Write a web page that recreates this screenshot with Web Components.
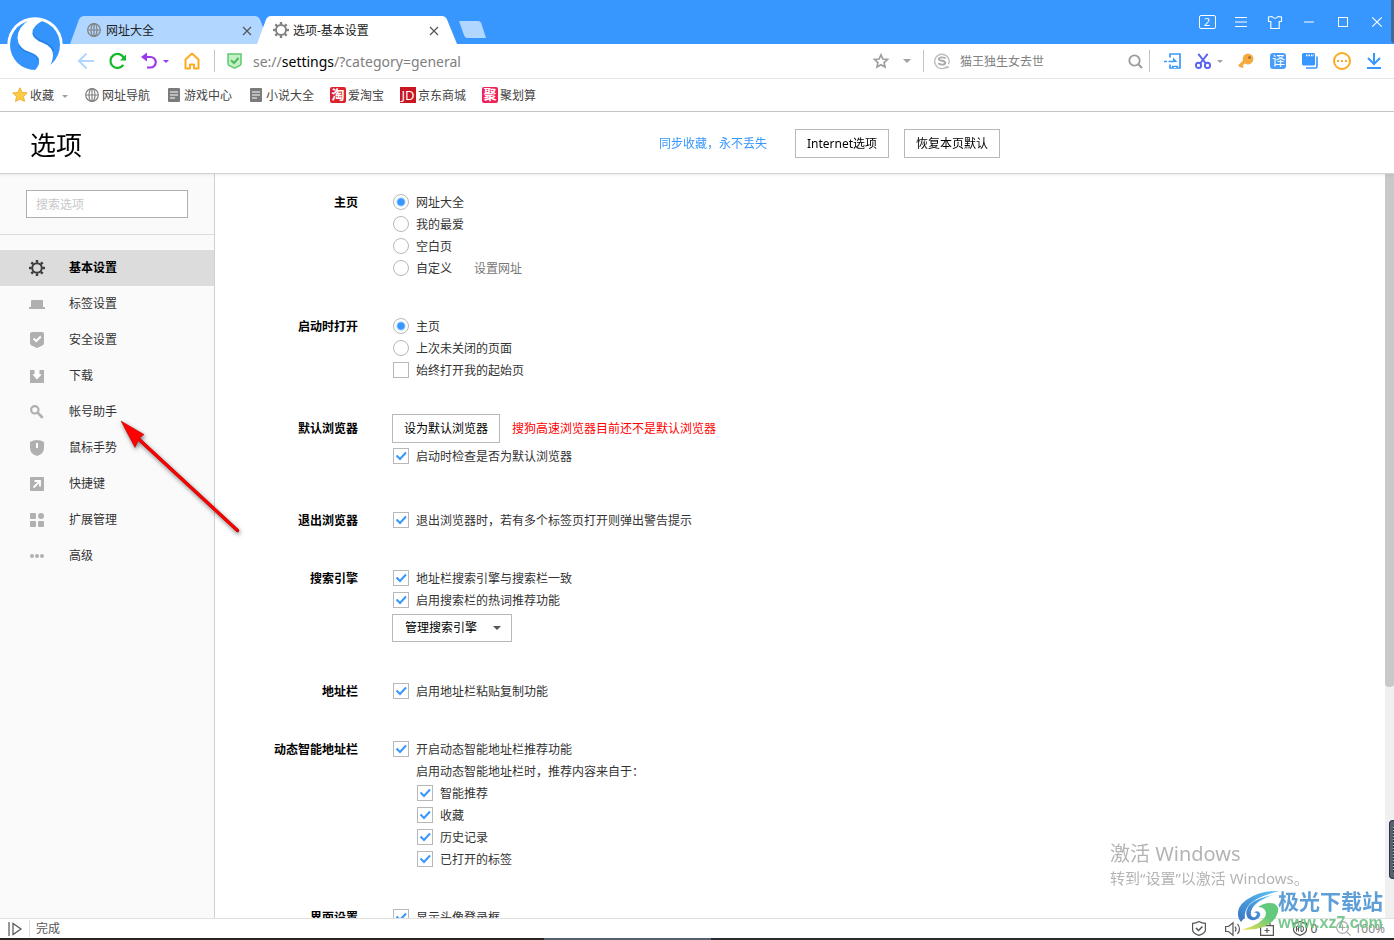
<!DOCTYPE html>
<html lang="zh-CN">
<head>
<meta charset="utf-8">
<title>选项-基本设置</title>
<style>
  html, body { margin: 0; height: 100%; }
  body {
    font: 12px/22px "Noto Sans", "Noto Sans CJK SC", sans-serif;
    color: #333;
    background: #fff;
    --blue: #3896ff;
    --line: #c8c8c8;
  }
</style>
</head>
<body>
<browser-window></browser-window>

<script>
const define = (tag, html, setup) => {
  const template = document.createElement('template');
  template.innerHTML = html;
  customElements.define(tag, class extends HTMLElement {
    constructor() {
      super();
      this.attachShadow({ mode: 'open' }).append(template.content.cloneNode(true));
    }
    connectedCallback() { if (setup) setup(this, this.shadowRoot); }
  });
};

/* name: [width, height, markup] */
const gear = (r, c, n) => {
  let s = `<circle cx="8" cy="8" r="${r}" fill="none" stroke="${c}" stroke-width="2"/>`;
  for (let i = 0; i < n; i++) s += `<path d="M8 0v2.6" stroke="${c}" stroke-width="2.4" transform="rotate(${i * 360 / n} 8 8)"/>`;
  return s;
};
const globe = '<g fill="none" stroke="#808080" stroke-width="1.2"><circle cx="7" cy="7" r="6.3"/><ellipse cx="7" cy="7" rx="3" ry="6.3"/><path d="M7 .7v12.6M.7 7h12.6"/></g>';
const doc = '<rect width="12" height="14" rx="1" fill="#7b7b7b"/><path d="M2 4h8M2 7h8M2 10h5" stroke="#fff" stroke-width="1.2"/>';
const ICONS = {
  globe: [14, 14, globe],
  doc: [12, 14, doc],
  gearTab: [16, 16, gear(5, '#828282', 8)],
  gear: [16, 16, gear(4.8, '#3c3c3c', 8)],
  close: [10, 10, '<path d="M1 1l8 8M9 1l-8 8" stroke="#555" stroke-width="1.2"/>'],
  newtab: [28, 17, '<path d="M1 0h19q2.500 0 3.300 2.300L28 17H9.500Q7 17 6.200 14.700Z" fill="#b1d6ff"/>'],
  tabs2: [17, 14, '<rect x=".5" y=".5" width="16" height="13" rx="1.500" fill="none" stroke="#fff"/>'],
  menu: [12, 10, '<path d="M0 .5h12M0 5h12M0 9.500h12" stroke="#fff"/>'],
  shirt: [14, 13, '<path d="M.5 1 4 .5Q7 4 10 .5l3.500.5v4.500h-2.300v7H2.800v-7H.5Z" fill="none" stroke="#fff" stroke-width="1.100"/>'],
  min: [10, 2, '<path d="M0 1h10" stroke="#fff"/>'],
  max: [10, 10, '<rect x=".5" y=".5" width="9" height="9" fill="none" stroke="#fff"/>'],
  winclose: [10, 10, '<path d="M.3.3l9.400 9.400M9.700.3.3 9.700" stroke="#fff" stroke-width="1.200"/>'],
  back: [16, 16, '<path d="M16 8H1M8.500.5 1 8l7.500 7.500" fill="none" stroke="#b1d6ff" stroke-width="2"/>'],
  reload: [18, 16, '<path d="M14.300 11.800A7 7 0 1 1 14.800 5" fill="none" stroke="#12b92a" stroke-width="2.200"/><path d="M17 1.500v6h-6Z" fill="#12b92a"/>'],
  undo: [16, 16, '<path d="M3 4h6.500a5.200 5.200 0 0 1 0 10.500H6" fill="none" stroke="#9a38f0" stroke-width="2.200"/><path d="M0 4 6-.5v9Z" fill="#9a38f0"/>'],
  caretPurple: [6, 3, '<path d="M0 0h6L3 3Z" fill="#9a38f0"/>'],
  caret: [8, 4, '<path d="M0 0h8L4 4Z" fill="#a0a0a0"/>'],
  caretSmall: [6, 3, '<path d="M0 0h6L3 3Z" fill="#a0a0a0"/>'],
  home: [16, 18, '<path d="M1.500 16.500v-9L8 1.500l6.500 6v9H10v-4H6v4Z" fill="none" stroke="#ffab1f" stroke-width="2" stroke-linejoin="round"/>'],
  shield: [15, 16, '<path d="M1 1h13v9.500q0 1.500-1.500 2.200L7.500 15.200 2.500 12.700Q1 12 1 10.500Z" fill="#c5f0c6" stroke="#62c970" stroke-width="1.500"/><path d="M4 7.200 7 10l4.500-5" fill="none" stroke="#4dbb5e" stroke-width="2"/>'],
  star: [16, 16, '<path d="M8 1.800 9.900 6l4.600.5-3.400 3.100.9 4.500L8 11.800l-4 2.300.9-4.500L1.500 6.500 6.100 6Z" fill="none" stroke="#9e9e9e" stroke-width="1.700"/>'],
  favStar: [16, 16, '<path d="M8 .8 10.200 5.400l5.100.6-3.800 3.500 1 5L8 12l-4.500 2.500 1-5L.7 6l5.100-.6Z" fill="#fccb45" stroke="#eeb23a"/>'],
  sogou: [16, 16, '<path d="M13.200 13.300a7.200 7.200 0 1 1 1.300-2M12 15.200l3-1.500" fill="none" stroke="#bdbdbd" stroke-width="1.300"/><path d="M11.500 5.500Q11 4.400 8 4.400T4.800 6.200Q5 7.500 8 7.800t3.300 2Q11 11.600 8 11.600T4.300 10.300" fill="none" stroke="#aaa" stroke-width="1.900"/>'],
  search: [15, 15, '<circle cx="6.500" cy="6.500" r="5.200" fill="none" stroke="#9b9b9b" stroke-width="1.800"/><path d="M10.500 10.500l3.500 3.500" stroke="#9b9b9b" stroke-width="2"/>'],
  send: [17, 16, '<path d="M6 4.500V1h10v14H6v-3.500" fill="none" stroke="#3d98fb" stroke-width="1.700"/><path d="M9 4.500 13.500 9H9Z" fill="#3d98fb"/><path d="M0 8.500h3m1.500 0H10" stroke="#3d98fb" stroke-width="1.700"/><path d="M8 13.500h6" stroke="#3d98fb" stroke-width="1.500"/><path d="M10 14.500h2" stroke="#fff"/>'],
  cut: [16, 16, '<g fill="none" stroke="#5962f3" stroke-width="1.900"><path d="M3.300.8 10.500 10M12.700.8 5.500 10"/><circle cx="3.500" cy="12.400" r="2.600"/><circle cx="12.500" cy="12.400" r="2.600"/></g>'],
  key: [16, 16, '<circle cx="10" cy="6" r="5.400" fill="#f6a93f"/><path d="M7 8 1.200 13.500" stroke="#f6a93f" stroke-width="3.200"/><path d="M3 12.500l2 2" stroke="#f6a93f" stroke-width="2"/><circle cx="11.500" cy="4.500" r="1.500" fill="#a87535"/>'],
  pages: [16, 16, '<path d="M15 3.500v10q0 1.500-1.500 1.500H4" fill="none" stroke="#3896ff" stroke-width="1.600"/><rect width="13" height="12.500" rx="1.500" fill="#3896ff"/><path d="M4 2.400h8" stroke="#fff" stroke-width="1.600" stroke-dasharray="1.500 1"/>'],
  more: [18, 18, '<circle cx="9" cy="9" r="8" fill="none" stroke="#fca91f" stroke-width="2"/><path d="M4 9h10" stroke="#fca91f" stroke-width="2" stroke-dasharray="2 2"/>'],
  download: [14, 16, '<path d="M7 0v11M1 5l6 6 6-6M0 15h14" fill="none" stroke="#3896ff" stroke-width="2"/>'],
  navTab: [16, 9, '<path d="M2 7V1q0-1 1-1h10q1 0 1 1v6h2v2H0V7Z" fill="#b0b0b0"/>'],
  navShield: [14, 16, '<path d="M0 2q0-2 2-2h10q2 0 2 2v9q0 1.500-1.500 2.500L7 16 1.500 13.500Q0 12.500 0 11Z" fill="#b0b0b0"/><path d="M3.500 6.500 6.300 9l4.500-4.500" fill="none" stroke="#fff" stroke-width="2"/>'],
  navDown: [14, 13, '<path d="M0 0h4.500v4H2.500L7 9l4.500-5h-2V0H14v13H0Z" fill="#b0b0b0"/><path d="M5.900 0h2.200v5H11L7 9.500 3 5h2.900Z" fill="#fff"/>'],
  navKey: [14, 14, '<circle cx="4.800" cy="4.800" r="3.700" fill="none" stroke="#b0b0b0" stroke-width="2.200"/><path d="M7.500 7.500l5.300 5.300M10 12l2-2" fill="none" stroke="#b0b0b0" stroke-width="2.600"/>'],
  navMouse: [14, 16, '<path d="M0 2Q7-2 14 2v6q0 6-7 8-7-2-7-8Z" fill="#b0b0b0"/><path d="M7 3v5" stroke="#fff" stroke-width="2"/>'],
  navQuick: [14, 14, '<rect width="14" height="14" rx="1" fill="#b0b0b0"/><path d="M3.500 10.500l6-6M4.500 4H10v5.500" fill="none" stroke="#fff" stroke-width="1.800"/>'],
  navExt: [14, 14, '<g fill="#b0b0b0"><rect width="6" height="6" rx="1"/><circle cx="11" cy="3" r="3"/><rect y="8" width="6" height="6" rx="1"/><rect x="8" y="8" width="6" height="6" rx="1"/></g>'],
  navDots: [14, 4, '<g fill="#b0b0b0"><circle cx="2" cy="2" r="2"/><circle cx="7" cy="2" r="2"/><circle cx="12" cy="2" r="2"/></g>'],
  panel: [14, 14, '<path d="M1 0v14" stroke="#555" stroke-width="1.200"/><path d="M5 1.500v11L13 7Z" fill="none" stroke="#555" stroke-width="1.200"/>'],
  stShield: [14, 15, '<path d="M.6 2.400Q4 2.400 7 .6q3 1.800 6.400 1.800V9q0 3.200-6.400 5.400Q.6 12.200.6 9Z" fill="none" stroke="#555" stroke-width="1.200"/><path d="M4 7l2.500 2.500 4-4" fill="none" stroke="#555" stroke-width="1.500"/>'],
  stSound: [16, 14, '<path d="M.6 4.500H3.500L8 .8v12.400L3.500 9.500H.6Z" fill="none" stroke="#555" stroke-width="1.200"/><path d="M10 4.500q2 2.500 0 5M12.500 2q4 5 0 10" fill="none" stroke="#555" stroke-width="1.200"/>'],
  stBox: [14, 14, '<path d="M.6 3.600h12.800v9.800H.6ZM4 3.500V.6h6v2.900M7 6v5M4.500 8.500h5" fill="none" stroke="#555" stroke-width="1.200"/>'],
  stAd: [14, 15, '<path d="M.6 2.400Q4 2.400 7 .6q3 1.800 6.400 1.800V9q0 3.200-6.400 5.400Q.6 12.200.6 9Z" fill="none" stroke="#555" stroke-width="1.200"/><path d="M3.500 10.500V6q0-1 1-1t1 1v4.500M3.500 8h2M8 5v5.500h1q1.500 0 1.500-2.700T9 5Z" fill="none" stroke="#555"/>'],
  stZoom: [15, 15, '<g fill="none" stroke="#aaa" stroke-width="1.200"><circle cx="6.500" cy="6.500" r="5.800"/><path d="M10.800 10.800 14.500 14.500M6.500 3.500v6M3.500 6.500h6"/></g>'],
  logo: [56, 56, '<circle cx="28" cy="28" r="27.800" fill="#fff"/><circle cx="28" cy="28" r="25" fill="#3494fb"/><path d="M36 3.500Q25 9 25.500 16 26 22 35 25.500 46 29.500 46 38 46 45 41 51.500L38 54 28 53Q33 48 32 43 31 38 22 35 11 31 10.500 21 10.500 10 24 1.500Z" fill="#fff"/><path d="M12.500 29Q15 33.500 22 35.500 30 38 31.500 43" fill="none" stroke="#1d74d2" stroke-width="1.500" opacity=".6"/><path d="M26 16Q27 21.500 35.500 24.500 44 28 46.500 34" fill="none" stroke="#1d74d2" stroke-width="1.500" opacity=".6"/>'],
  swirl: [46, 42, '<defs><linearGradient id="a" x1="0" y1="1" x2="1" y2="0"><stop stop-color="#3a74c4"/><stop offset="1" stop-color="#5cc6f8"/></linearGradient><linearGradient id="b" x1="0" y1="1" x2="1" y2="0"><stop stop-color="#f3df53"/><stop offset=".6" stop-color="#63c97c"/></linearGradient></defs><path d="M43 1Q28 .5 17 6 3 13 2 22q-.5 6 3 10 2-3 4-4-1-7 4-13 7-8 30-14Z" fill="url(#a)"/><path d="M37 5Q17 9 12 17 8 25 13 29q4 2.500 9-.5 4-3.500 1-6.500-2-1.500-5 .5 3-.5 3 2-1.500 3.500-4.500 2.500-3-2-1-7Q19 11 37 5Z" fill="url(#a)"/><path d="M22 17q8-5.500 16-3.500 6 3 3.500 10-3 9-14 13.500-10 3.500-21 2.500 14-4 19-9 6-5 4-9.500Q27.500 17 22 17Z" fill="url(#b)"/>']
};

define('svg-icon', `<style>:host{display:inline-flex;flex:none}svg{display:block;overflow:visible}</style><span></span>`, (el, root) => {
  const [w, h, body] = ICONS[el.getAttribute('name')];
  root.querySelector('span').innerHTML = `<svg width="${w}" height="${h}" viewBox="0 0 ${w} ${h}" aria-hidden="true">${body}</svg>`;
});

/* ---------- title bar ---------- */
define('browser-tab', `
<style>
  :host { display: block; position: relative; flex: 0 1 200px; height: 28px; margin-right: -13px; --tab: #b1d6ff; }
  :host([active]) { --tab: #fff; z-index: 1; }
  .shape { position: absolute; inset: 0; width: 100%; height: 100%; }
  .row { position: relative; display: flex; align-items: center; height: 100%; padding: 0 18px 0 16px; color: #222; }
  .icon { width: 16px; margin-right: 4px; display: flex; justify-content: center; }
  .text { flex: 1; padding-top: 2px; white-space: nowrap; overflow: hidden; }
  button { display: flex; padding: 2px 0 0; border: 0; background: none; }
</style>
<svg class="shape" viewBox="0 0 200 28" preserveAspectRatio="none" aria-hidden="true"><path d="M0 28 9 3.500Q10.500 0 14 0H185q3.500 0 5 3.500L200 28Z" fill="var(--tab)"/></svg>
<div class="row"><span class="icon"><slot name="icon"></slot></span><span class="text"><slot></slot></span><button aria-label="关闭标签"><svg-icon name="close"></svg-icon></button></div>`);

define('title-bar', `
<style>
  :host { display: flex; align-items: flex-end; height: 44px; padding-left: 70px; background: var(--blue); position: relative; }
  button { display: flex; align-items: center; justify-content: center; padding: 0; border: 0; background: none; }
  .new { margin: 0 0 6px 14px; }
  .controls { display: flex; align-self: flex-start; margin-left: auto; }
  .controls button { width: 34px; height: 44px; position: relative; }
  .count { position: absolute; font: 11px/14px "Noto Sans", sans-serif; color: #fff; }
  .logo { position: absolute; left: 7px; top: 17px; z-index: 3; }
  .edge { position: absolute; right: 0; top: 0; width: 3px; height: 43px; background: #44688f; border-radius: 0 0 0 3px; }
</style>
<svg-icon class="logo" name="logo"></svg-icon>
<browser-tab><svg-icon slot="icon" name="globe"></svg-icon>网址大全</browser-tab>
<browser-tab active><svg-icon slot="icon" name="gearTab"></svg-icon>选项-基本设置</browser-tab>
<button class="new" aria-label="新建标签"><svg-icon name="newtab"></svg-icon></button>
<div class="controls">
  <button aria-label="标签列表"><svg-icon name="tabs2"></svg-icon><span class="count">2</span></button>
  <button aria-label="菜单"><svg-icon name="menu"></svg-icon></button>
  <button aria-label="皮肤"><svg-icon name="shirt"></svg-icon></button>
  <button aria-label="最小化"><svg-icon name="min"></svg-icon></button>
  <button aria-label="最大化"><svg-icon name="max"></svg-icon></button>
  <button aria-label="关闭"><svg-icon name="winclose"></svg-icon></button>
</div>
<div class="edge"></div>`);

/* ---------- address bar ---------- */
define('address-bar', `
<style>
  :host { display: flex; align-items: center; height: 34px; padding: 0 4px 0 70px; border-bottom: 1px solid #e3e3e3; background: #fff; }
  button { display: flex; align-items: center; justify-content: center; width: 32px; height: 32px; padding: 0; border: 0; background: none; flex: none; }
  .undo { width: 42px; gap: 6px; }
  .sep { width: 1px; height: 22px; background: #c4c4c4; flex: none; }
  .home { margin-right: 6px; }
  .shield { margin: 0 11px 0 12px; }
  .url { flex: 1; padding-top: 1px; font-size: 14px; line-height: 32px; color: #808080; white-space: nowrap; overflow: hidden; }
  .url b { font-weight: 400; color: #000; }
  .fav { width: 24px; }
  .drop { width: 28px; margin-right: 2px; }
  .find { display: flex; align-items: center; width: 225px; padding-left: 10px; box-sizing: border-box; }
  input { flex: 1; min-width: 0; margin: 0 0 0 10px; padding: 2px 0 0; border: 0; outline: 0; background: none; font: inherit; color: #808080; height: 22px; }
  input::placeholder { color: #808080; opacity: 1; }
  .go { width: 16px; margin-right: 6px; }
  .first { margin-left: 6px; }
  .cut { width: 42px; gap: 6px; }
  .tr { width: 16px; height: 16px; border-radius: 3px; background: #4a9cfb; color: #fff; font-size: 13px; line-height: 16px; text-align: center; }
</style>
<button aria-label="后退"><svg-icon name="back"></svg-icon></button>
<button aria-label="刷新"><svg-icon name="reload"></svg-icon></button>
<button class="undo" aria-label="撤销"><svg-icon name="undo"></svg-icon><svg-icon name="caretPurple"></svg-icon></button>
<button class="home" aria-label="主页"><svg-icon name="home"></svg-icon></button>
<span class="sep"></span>
<svg-icon class="shield" name="shield"></svg-icon>
<div class="url">se://<b>settings</b>/?category=general</div>
<button class="fav" aria-label="收藏此页"><svg-icon name="star"></svg-icon></button>
<button class="drop" aria-label="更多收藏"><svg-icon name="caret"></svg-icon></button>
<span class="sep"></span>
<div class="find"><svg-icon name="sogou"></svg-icon><input type="text" aria-label="搜索" placeholder="猫王独生女去世"><button class="go" aria-label="搜索"><svg-icon name="search"></svg-icon></button></div>
<span class="sep"></span>
<button class="first" aria-label="发送到手机"><svg-icon name="send"></svg-icon></button>
<button class="cut" aria-label="截图"><svg-icon name="cut"></svg-icon><svg-icon name="caretSmall"></svg-icon></button>
<button aria-label="密码"><svg-icon name="key"></svg-icon></button>
<button aria-label="翻译"><span class="tr">译</span></button>
<button aria-label="窗口"><svg-icon name="pages"></svg-icon></button>
<button aria-label="更多"><svg-icon name="more"></svg-icon></button>
<button aria-label="下载"><svg-icon name="download"></svg-icon></button>`);

/* ---------- bookmarks ---------- */
define('bookmark-link', `
<style>
  :host { display: block; }
  a { display: flex; align-items: center; gap: 2px; color: #444; text-decoration: none; white-space: nowrap; }
  .icon { display: flex; justify-content: center; width: 16px; }
  .text { display: flex; align-items: center; padding-top: 2px; }
</style>
<a href="#"><span class="icon"><slot name="icon"></slot></span><span class="text"><slot></slot></span></a>`);

define('bookmarks-bar', `
<style>
  :host { display: flex; align-items: center; gap: 16px; height: 32px; padding: 0 12px; border-bottom: 1px solid var(--line); background: #fff; }
  .caret { margin-left: 8px; }
  .badge { width: 16px; height: 16px; border-radius: 2px; background: #d9232e; color: #fff; font-size: 13px; line-height: 15px; text-align: center; font-weight: 700; }
  .jd { background: #c81623; border-radius: 0; font-weight: 400; line-height: 16px; }
  .ju { background: #ee2159; }
</style>
<bookmark-link><svg-icon slot="icon" name="favStar"></svg-icon>收藏<svg-icon class="caret" name="caretSmall"></svg-icon></bookmark-link>
<bookmark-link><svg-icon slot="icon" name="globe"></svg-icon>网址导航</bookmark-link>
<bookmark-link><svg-icon slot="icon" name="doc"></svg-icon>游戏中心</bookmark-link>
<bookmark-link><svg-icon slot="icon" name="doc"></svg-icon>小说大全</bookmark-link>
<bookmark-link><span slot="icon" class="badge">淘</span>爱淘宝</bookmark-link>
<bookmark-link><span slot="icon" class="badge jd">JD</span>京东商城</bookmark-link>
<bookmark-link><span slot="icon" class="badge ju">聚</span>聚划算</bookmark-link>`);

/* ---------- settings header ---------- */
define('line-button', `
<style>
  :host { display: inline-block; }
  button { display: block; height: 29px; padding: 0 11px; border: 1px solid #b8b8b8; background: #fff; color: #000; font: inherit; line-height: 27px; white-space: nowrap; }
</style>
<button><slot></slot></button>`);

define('page-header', `
<style>
  :host { display: block; border-bottom: 1px solid #d2d2d2; background: #fff; box-shadow: 0 1px 3px rgba(0,0,0,.08); position: relative; z-index: 1; }
  .inner { display: flex; align-items: center; max-width: 1000px; box-sizing: border-box; height: 61px; padding: 2px 0 0 30px; }
  h1 { flex: 1; margin: 0; padding-top: 2px; font-size: 26px; font-weight: 400; line-height: 40px; color: #000; }
  a { color: var(--blue); text-decoration: none; margin-right: 28px; }
  line-button + line-button { margin-left: 15px; }
</style>
<div class="inner"><h1>选项</h1><a href="#">同步收藏，永不丢失</a><line-button>Internet选项</line-button><line-button>恢复本页默认</line-button></div>`);

/* ---------- side navigation ---------- */
define('nav-item', `
<style>
  :host { display: block; }
  a { display: flex; align-items: center; height: 36px; color: #333; text-decoration: none; }
  :host([current]) a { background: #dcdcdc; color: #000; font-weight: 700; }
  .icon { display: flex; justify-content: center; width: 24px; margin: 0 20px 0 25px; }
</style>
<a href="#"><span class="icon"></span><slot></slot></a>`, (el, root) => {
  root.querySelector('.icon').innerHTML = `<svg-icon name="${el.getAttribute('icon')}"></svg-icon>`;
});

define('side-nav', `
<style>
  :host { display: block; flex: none; width: 214px; border-right: 1px solid #d0d0d0; background: #fafafa; box-shadow: 1px 0 3px rgba(0,0,0,.08); }
  .search { padding: 16px 26px; border-bottom: 1px solid #dcdcdc; margin-bottom: 15px; }
  input { display: block; box-sizing: border-box; width: 100%; height: 28px; padding: 0 9px; border: 1px solid #b0b0b0; background: #fff; font: inherit; color: #333; border-radius: 0; }
  input::placeholder { color: #c8c8c8; opacity: 1; }
</style>
<div class="search"><input type="text" aria-label="搜索选项" placeholder="搜索选项"></div>
<nav>
  <nav-item current icon="gear">基本设置</nav-item>
  <nav-item icon="navTab">标签设置</nav-item>
  <nav-item icon="navShield">安全设置</nav-item>
  <nav-item icon="navDown">下载</nav-item>
  <nav-item icon="navKey">帐号助手</nav-item>
  <nav-item icon="navMouse">鼠标手势</nav-item>
  <nav-item icon="navQuick">快捷键</nav-item>
  <nav-item icon="navExt">扩展管理</nav-item>
  <nav-item icon="navDots">高级</nav-item>
</nav>`);

/* ---------- settings form ---------- */
define('option-row', `
<style>
  :host { display: flex; height: 22px; align-items: center; white-space: nowrap; }
  label { display: flex; align-items: center; }
  .text, .extra { padding-top: 2px; }
  input { appearance: none; display: block; box-sizing: border-box; width: 16px; height: 16px; margin: 0 7px 0 1px; border: 1px solid #b8b8b8; background: #fff center no-repeat; flex: none; }
  input[type=radio] { border-radius: 50%; }
  input[type=radio]:checked { background-image: radial-gradient(circle, #3896ff 0 3px, transparent 5px); }
  input[type=checkbox]:checked { background-image: url("data:image/svg+xml,%3Csvg xmlns='http://www.w3.org/2000/svg' width='14' height='14'%3E%3Cpath d='M2.500 6.500 6 10l6-6.500' fill='none' stroke='%233896ff' stroke-width='2'/%3E%3C/svg%3E"); }
</style>
<label><input><span class="text"><slot></slot></span></label><span class="extra"><slot name="after"></slot></span>`, (el, root) => {
  const input = root.querySelector('input');
  input.type = el.hasAttribute('radio') ? 'radio' : 'checkbox';
  input.checked = el.hasAttribute('checked');
  if (input.type === 'radio') input.addEventListener('change', () => {
    for (const row of el.parentNode.querySelectorAll('option-row[radio]'))
      if (row !== el) row.shadowRoot.querySelector('input').checked = false;
  });
});

define('settings-section', `
<style>
  :host { display: flex; margin-bottom: 36px; }
  h2 { flex: none; width: 143px; margin: 0 34px 0 0; padding-top: 1px; box-sizing: border-box; height: 22px; text-align: right; font: inherit; font-weight: 700; color: #000; }
</style>
<h2></h2><div><slot></slot></div>`, (el, root) => {
  root.querySelector('h2').textContent = el.getAttribute('heading');
});

define('settings-form', `
<style>
  :host { display: block; flex: 1; min-width: 0; min-height: 0; overflow-y: auto; scrollbar-width: none; background: #fff; }
  form { padding: 17px 0 0; }
  a { margin-left: 22px; color: #777; text-decoration: none; }
  .default { display: flex; align-items: center; gap: 12px; margin: -3px 0 2px; color: #f00; white-space: nowrap; }
  .after { height: 6px; }
  .pick { position: relative; width: 120px; margin: 3px 0 2px; }
  select { appearance: none; display: block; width: 100%; height: 28px; padding: 0 12px; border: 1px solid #b8b8b8; border-radius: 0; background: #fff; color: #000; font: inherit; line-height: 26px; }
  .pick::after { content: ""; position: absolute; right: 11px; top: 12px; border: 4px solid transparent; border-top-color: #555; border-bottom: 0; pointer-events: none; }
  p { margin: 0 0 0 24px; height: 21px; padding-top: 1px; }
  .sub { margin-left: 24px; }
</style>
<form>
<settings-section heading="主页">
  <option-row radio checked>网址大全</option-row>
  <option-row radio>我的最爱</option-row>
  <option-row radio>空白页</option-row>
  <option-row radio>自定义<a slot="after" href="#">设置网址</a></option-row>
</settings-section>
<settings-section heading="启动时打开">
  <option-row radio checked>主页</option-row>
  <option-row radio>上次未关闭的页面</option-row>
  <option-row>始终打开我的起始页</option-row>
</settings-section>
<settings-section heading="默认浏览器">
  <div class="default"><line-button>设为默认浏览器</line-button>搜狗高速浏览器目前还不是默认浏览器</div>
  <option-row checked>启动时检查是否为默认浏览器</option-row>
  <div class="after"></div>
</settings-section>
<settings-section heading="退出浏览器">
  <option-row checked>退出浏览器时，若有多个标签页打开则弹出警告提示</option-row>
</settings-section>
<settings-section heading="搜索引擎">
  <option-row checked>地址栏搜索引擎与搜索栏一致</option-row>
  <option-row checked>启用搜索栏的热词推荐功能</option-row>
  <div class="pick"><select aria-label="管理搜索引擎"><option>管理搜索引擎</option></select></div>
</settings-section>
<settings-section heading="地址栏">
  <option-row checked>启用地址栏粘贴复制功能</option-row>
</settings-section>
<settings-section heading="动态智能地址栏">
  <option-row checked>开启动态智能地址栏推荐功能</option-row>
  <p>启用动态智能地址栏时，推荐内容来自于：</p>
  <div class="sub">
    <option-row checked>智能推荐</option-row>
    <option-row checked>收藏</option-row>
    <option-row checked>历史记录</option-row>
    <option-row checked>已打开的标签</option-row>
  </div>
</settings-section>
<settings-section heading="界面设置">
  <option-row checked>显示头像登录框</option-row>
</settings-section>
</form>`);

define('scroll-rail', `
<style>
  :host { display: block; flex: none; width: 9px; background: #f0f0f0; }
  div { height: 69%; border-radius: 0 0 4px 4px; background: #c9c9c9; }
</style>
<div></div>`);

/* ---------- status bar ---------- */
define('status-bar', `
<style>
  :host { display: block; flex: none; background: #fff; border-top: 1px solid #e0e0e0; position: relative; }
  .row { display: flex; align-items: center; height: 19px; padding: 0 9px 0 8px; line-height: 19px; color: #555; }
  .sep { width: 1px; height: 17px; margin: 0 6px 0 7px; background: #ddd; }
  .msg { flex: 1; }
  .tools { display: flex; align-items: center; gap: 19px; }
  .ad { display: flex; gap: 4px; align-items: center; }
  .zoom { display: flex; gap: 3px; align-items: center; color: #888; }
  .base { height: 2px; background: linear-gradient(90deg, #2a2523 39%, #55606c 39% 51%, #2b2b2d 51%); }
</style>
<div class="row">
  <svg-icon name="panel"></svg-icon><span class="sep"></span><span class="msg">完成</span>
  <span class="tools">
    <svg-icon name="stShield"></svg-icon><svg-icon name="stSound"></svg-icon><svg-icon name="stBox"></svg-icon>
    <span class="ad"><svg-icon name="stAd"></svg-icon>0</span>
    <span class="zoom"><svg-icon name="stZoom"></svg-icon>100%</span>
  </span>
</div>
<div class="base"></div>`);

/* ---------- overlays on the desktop ---------- */
define('activation-notice', `
<style>
  :host { position: absolute; right: 81px; bottom: 51px; width: 203px; color: #b4b4b4; white-space: nowrap; pointer-events: none; }
  .big { font-size: 20px; line-height: 26px; }
  .small { font-size: 15px; line-height: 22px; }
</style>
<div class="big">激活 Windows</div><div class="small">转到“设置”以激活 Windows。</div>`);

define('site-stamp', `
<style>
  :host { position: absolute; right: 11px; bottom: 8px; display: flex; align-items: center; white-space: nowrap; pointer-events: none; font-weight: 700; }
  svg-icon { margin-right: -4px; }
  .name { font-size: 21px; line-height: 25px; color: #5f9fd8; }
  .site { font: 700 16px/18px "Liberation Sans", sans-serif; color: #6cc383; text-align: center; opacity: .9; }
</style>
<svg-icon name="swirl"></svg-icon>
<div><div class="name">极光下载站</div><div class="site">www.xz7.com</div></div>`);

define('pointer-arrow', `
<style>
  :host { position: absolute; left: 114px; top: 414px; pointer-events: none; }
  svg { display: block; overflow: visible; filter: drop-shadow(1px 2px 2px rgba(0,0,0,.5)); }
</style>
<svg width="132" height="126" viewBox="0 0 132 126" aria-hidden="true"><path d="M24 24.500 123.500 116.500" stroke="#b00000" stroke-width="3.400" stroke-linecap="round"/><path d="M24 24.500 123 116" stroke="#f00" stroke-width="2.400" stroke-linecap="round"/><path d="M7 7 30 20.500 25 24.500 21 33.500Z" fill="#f00" stroke="#a00" stroke-width=".5"/></svg>`);

define('edge-gadget', `
<style>
  :host { position: absolute; right: 0; bottom: 61px; box-sizing: border-box; width: 5px; height: 59px; border: 1px solid #2c3442; border-right: 0; border-radius: 4px 0 0 4px; background: #566070; }
  div { width: 1px; height: 45px; margin: 6px 0 0 3px; background: repeating-linear-gradient(#9fd0c0 0 1px, #333c48 1px 3px); }
</style>
<div></div>`);

define('browser-window', `
<style>
  :host { display: flex; flex-direction: column; height: 100vh; position: relative; overflow: hidden; }
  title-bar, address-bar, bookmarks-bar, page-header { flex: none; }
  .body { display: flex; flex: 1; min-height: 0; }
</style>
<title-bar></title-bar>
<address-bar></address-bar>
<bookmarks-bar></bookmarks-bar>
<page-header></page-header>
<div class="body"><side-nav></side-nav><settings-form></settings-form><scroll-rail></scroll-rail></div>
<status-bar></status-bar>
<pointer-arrow></pointer-arrow>
<activation-notice></activation-notice>
<edge-gadget></edge-gadget>
<site-stamp></site-stamp>`);
</script>
</body>
</html>
